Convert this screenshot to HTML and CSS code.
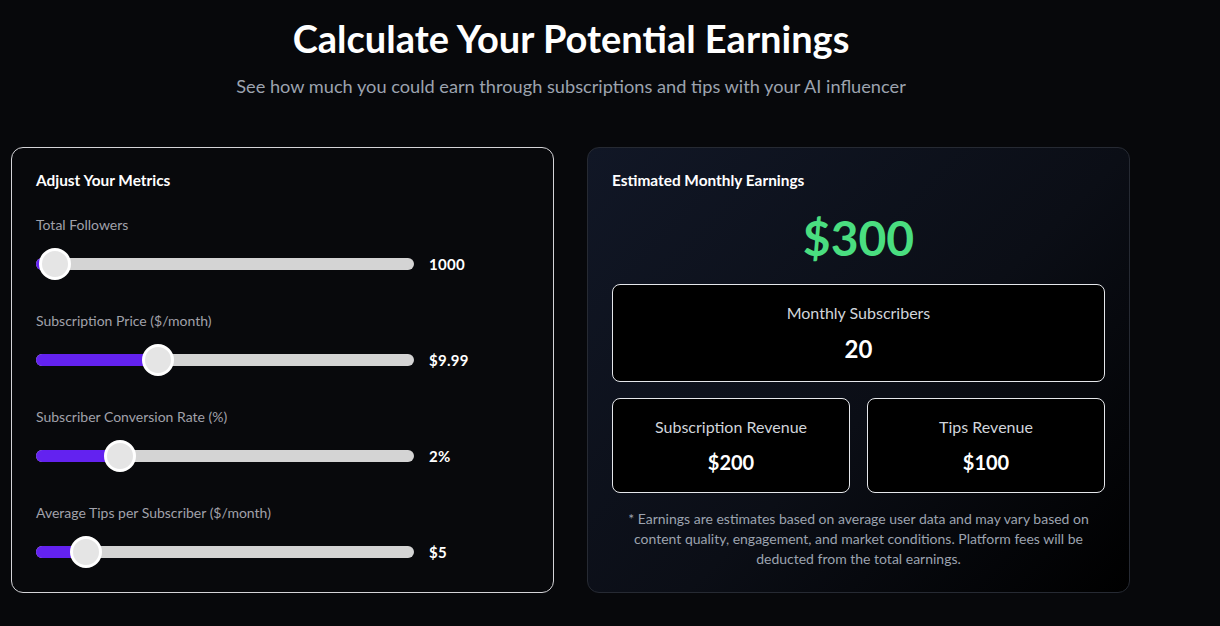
FILE: index.html
```html
<!DOCTYPE html>
<html lang="en">
<head>
<meta charset="utf-8">
<title>Earnings Calculator</title>
<link rel="stylesheet" href="styles.css">
</head>
<body>
<main class="page">
  <header class="intro">
    <h1 class="title">Calculate Your Potential Earnings</h1>
    <p class="subtitle">See how much you could earn through subscriptions and tips with your AI influencer</p>
  </header>
  <section class="grid">
    <div class="card metrics">
      <h3 class="card-title">Adjust Your Metrics</h3>
      <div class="field">
        <div class="field-label">Total Followers</div>
        <div class="slider-row">
          <div class="track"><div class="fill" style="width:19px"></div><div class="thumb" style="left:3px"></div></div>
          <div class="value">1000</div>
        </div>
      </div>
      <div class="field">
        <div class="field-label">Subscription Price ($/month)</div>
        <div class="slider-row">
          <div class="track"><div class="fill" style="width:122px"></div><div class="thumb" style="left:106px"></div></div>
          <div class="value">$9.99</div>
        </div>
      </div>
      <div class="field">
        <div class="field-label">Subscriber Conversion Rate (%)</div>
        <div class="slider-row">
          <div class="track"><div class="fill" style="width:84px"></div><div class="thumb" style="left:68px"></div></div>
          <div class="value">2%</div>
        </div>
      </div>
      <div class="field">
        <div class="field-label">Average Tips per Subscriber ($/month)</div>
        <div class="slider-row">
          <div class="track"><div class="fill" style="width:50px"></div><div class="thumb" style="left:34px"></div></div>
          <div class="value">$5</div>
        </div>
      </div>
    </div>
    <div class="card results">
      <h3 class="card-title">Estimated Monthly Earnings</h3>
      <div class="total">$300</div>
      <div class="stat wide">
        <div class="stat-label">Monthly Subscribers</div>
        <div class="stat-value big">20</div>
      </div>
      <div class="stat-pair">
        <div class="stat">
          <div class="stat-label">Subscription Revenue</div>
          <div class="stat-value">$200</div>
        </div>
        <div class="stat">
          <div class="stat-label">Tips Revenue</div>
          <div class="stat-value">$100</div>
        </div>
      </div>
      <p class="note">* Earnings are estimates based on average user data and may vary based on content quality, engagement, and market conditions. Platform fees will be deducted from the total earnings.</p>
    </div>
  </section>
</main>
</body>
</html>
```
FILE: styles.css
```css
* { box-sizing: border-box; }
html, body { margin: 0; padding: 0; }
body {
  background: #07080b;
  color: #fff;
  font-family: Lato, "Noto Sans", sans-serif;
  height: 626px;
  overflow: hidden;
}
.page {
  width: 1120px;
  margin-left: 11px;
  padding-top: 18px;
}
.intro { text-align: center; }
.title {
  margin: 0 0 14px;
  font-size: 38px;
  line-height: 40px;
  font-weight: 700;
}
.subtitle {
  margin: 0 0 47px;
  font-size: 18.2px;
  line-height: 28px;
  color: #9ca3af;
}
.grid {
  display: grid;
  grid-template-columns: 543px 543px;
  column-gap: 33px;
}
.card {
  border-radius: 12px;
  padding: 22px 24px 23px;
}
.metrics {
  border: 1px solid #d4d4d8;
  background: #08090c;
}
.results {
  border: 1px solid #262a33;
  background: linear-gradient(135deg, #111726 0%, #0b0e16 55%, #000 100%);
}
.card-title {
  margin: 0;
  font-size: 15.4px;
  line-height: 20px;
  font-weight: 700;
}
.metrics .card-title { margin-bottom: 25px; }
.field { margin-bottom: 31px; }
.field:last-child { margin-bottom: 0; }
.field-label {
  font-size: 14px;
  line-height: 20px;
  color: #a1a1aa;
  margin-bottom: 13px;
}
.slider-row {
  display: flex;
  align-items: center;
  height: 32px;
}
.track {
  position: relative;
  flex: 1;
  height: 12px;
  border-radius: 6px;
  background: #d4d4d4;
}
.fill {
  height: 12px;
  border-radius: 6px;
  background: #6322f0;
}
.thumb {
  position: absolute;
  top: -10px;
  width: 32px;
  height: 32px;
  border-radius: 50%;
  background: #e5e5e5;
  border: 3px solid #fff;
}
.value {
  width: 100px;
  margin-left: 15px;
  font-size: 15px;
  letter-spacing: 0.3px;
  font-weight: 700;
  color: #fff;
}
.total {
  margin: 24px 0 22px;
  text-align: center;
  font-size: 48px;
  line-height: 48px;
  font-weight: 700;
  color: #4ade80;
}
.stat {
  background: #000;
  border: 1px solid #e5e7eb;
  border-radius: 8px;
  padding: 16px;
  text-align: center;
}
.stat-label {
  font-size: 16px;
  line-height: 24px;
  color: #d1d5db;
}
.stat-value {
  margin-top: 9px;
  font-size: 20px;
  line-height: 28px;
  font-weight: 700;
}
.stat-value.big {
  margin-top: 8px;
  font-size: 24px;
  line-height: 32px;
}
.stat-pair {
  margin-top: 16px;
  display: grid;
  grid-template-columns: 1fr 1fr;
  column-gap: 17px;
}
.note {
  margin: 16px 0 0;
  text-align: center;
  font-size: 14px;
  line-height: 20px;
  color: #9ca3af;
}
```
